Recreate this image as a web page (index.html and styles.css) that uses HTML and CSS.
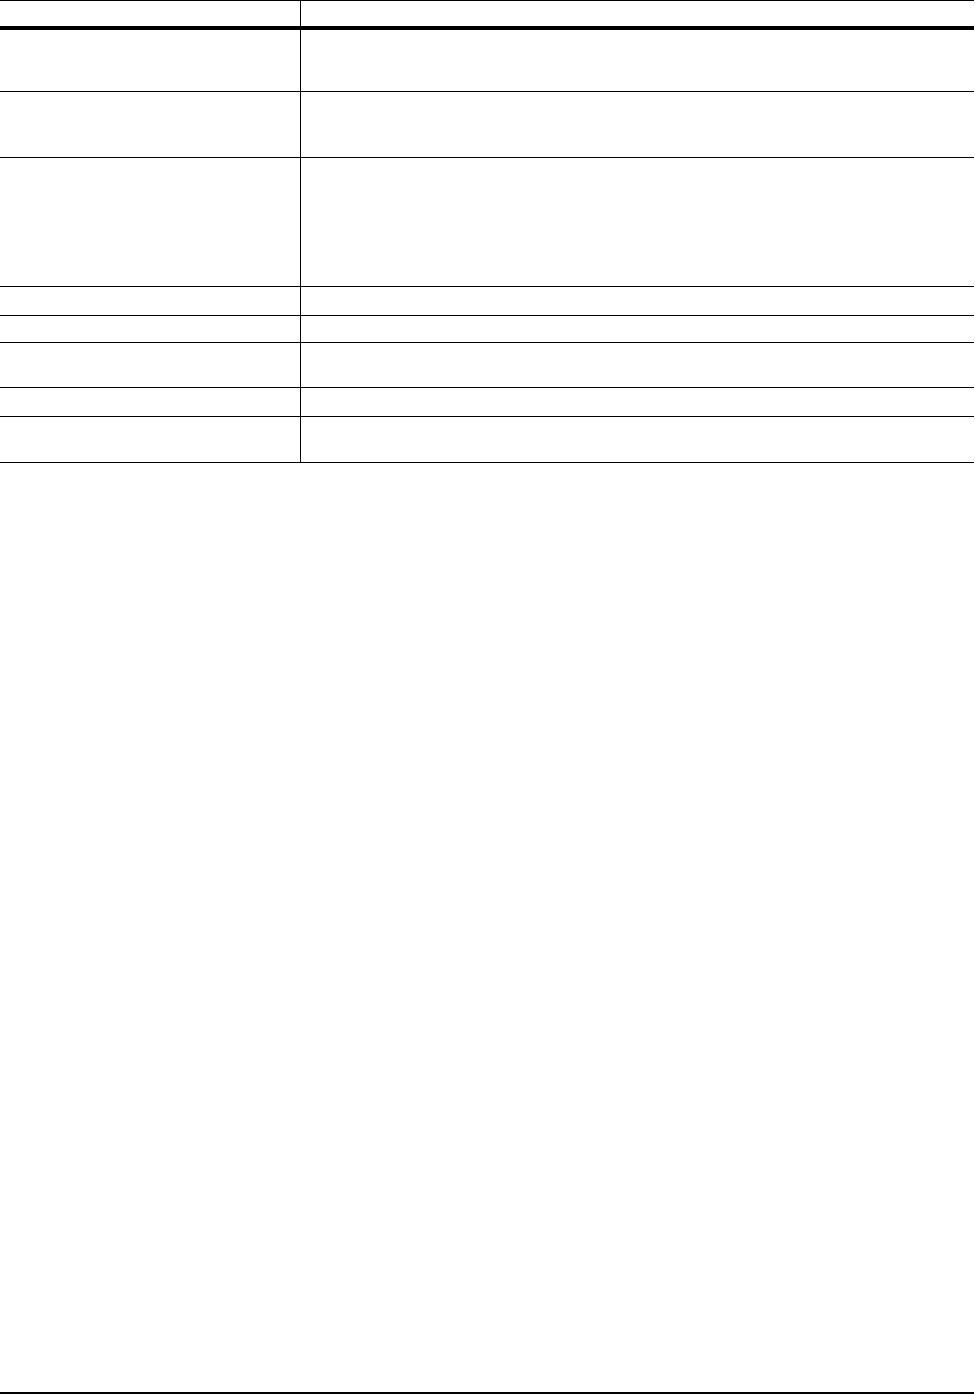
FILE: index.html
```html
<!DOCTYPE html>
<html>
  <head>
    <title>Table page</title>
    <link rel="stylesheet" href="styles.css">
  </head>
  <body>
    <div class="page">
      <table class="sheet">
        <thead>
          <tr>
            <th class="key"></th>
            <th class="val"></th>
          </tr>
        </thead>
        <tbody>
          <tr class="h61"><td class="key"></td><td class="val"></td></tr>
          <tr class="h65"><td class="key"></td><td class="val"></td></tr>
          <tr class="h128"><td class="key"></td><td class="val"></td></tr>
          <tr class="h28"><td class="key"></td><td class="val"></td></tr>
          <tr class="h26"><td class="key"></td><td class="val"></td></tr>
          <tr class="h44"><td class="key"></td><td class="val"></td></tr>
          <tr class="h28"><td class="key"></td><td class="val"></td></tr>
          <tr class="h45"><td class="key"></td><td class="val"></td></tr>
        </tbody>
      </table>
      <div class="footline"></div>
    </div>
  </body>
</html>
```

FILE: styles.css
```css
body {
  margin: 0;
  font-family: "Liberation Sans", Arial, sans-serif;
  font-size: 13px;
  color: #000;
  background: #fff;
}

.page {
  display: flex;
  flex-direction: column;
  min-height: 100vh;
}

.sheet {
  width: 974px;
  border-collapse: separate;
  border-spacing: 0;
  table-layout: fixed;
}

.sheet th,
.sheet td {
  padding: 0;
  box-sizing: border-box;
  vertical-align: top;
  text-align: left;
}

.sheet th {
  height: 30px;
  border-top: 1px solid #000;
  border-bottom: 4px solid #000;
}

.sheet td {
  border-bottom: 1px solid #000;
}

.sheet .key {
  width: 301px;
  border-right: 1px solid #000;
}

.h61 td { height: 62px; }
.h65 td { height: 66px; }
.h128 td { height: 129px; }
.h28 td { height: 29px; }
.h26 td { height: 27px; }
.h44 td { height: 45px; }
.h45 td { height: 46px; }

.footline {
  margin-top: auto;
  width: 974px;
  height: 2px;
  background: #000;
}
```
